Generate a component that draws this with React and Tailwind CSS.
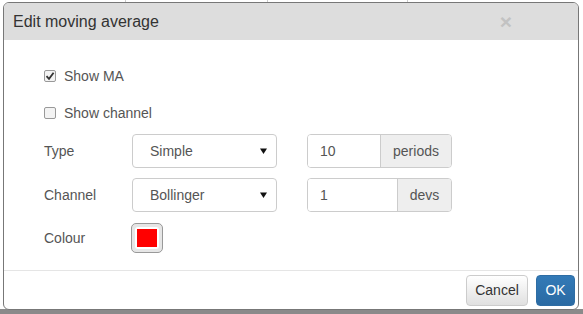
import React from 'react';

const Caret = () => (
  <svg width="7" height="6" viewBox="0 0 7 6" className="shrink-0">
    <path d="M0 0.5 L7 0.5 L3.5 6 Z" fill="#111" />
  </svg>
);

const SelectBox = ({ value }) => (
  <div className="w-[145px] h-[34px] flex items-center justify-between pl-[17px] pr-[9px] bg-white border border-[#ccc] rounded-[4px] text-[14px] text-[#555]">
    <span>{value}</span>
    <Caret />
  </div>
);

const InputGroup = ({ value, addon, inputWidth }) => (
  <div className="w-[145px] h-[34px] flex border border-[#ccc] rounded-[4px] overflow-hidden text-[14px] text-[#555]">
    <div className="flex items-center pl-[12px] bg-white shrink-0" style={{ width: inputWidth }}>
      {value}
    </div>
    <div className="flex-1 flex items-center justify-center bg-[#eee] border-l border-[#ccc]">{addon}</div>
  </div>
);

const Check = ({ checked, label }) => (
  <label className="flex items-center h-[20px] gap-[8px]">
    <span className="w-[12px] h-[12px] rounded-[2px] border border-[#999] bg-[#f3f3f3] flex items-center justify-center">
      {checked && (
        <svg width="10" height="10" viewBox="0 0 10 10">
          <path d="M1.5 5.2 L4 7.8 L8.6 1.8" fill="none" stroke="#333" strokeWidth="1.8" />
        </svg>
      )}
    </span>
    <span>{label}</span>
  </label>
);

export default function App() {
  return (
    <div
      className="relative w-[583px] h-[314px] overflow-hidden bg-white"
      style={{ fontFamily: '"Liberation Sans", Arial, sans-serif' }}
    >
      {/* page behind the dialog */}
      <div className="absolute inset-0 flex">
        <div className="w-[126px] border-r border-[#ccc]" />
        <div className="w-[142px] border-r border-[#ccc]" />
        <div className="w-[140px] border-r border-[#ccc]" />
      </div>
      <div className="absolute left-0 right-0 top-[309px] h-[5px] bg-[#8a8a8a]" />

      {/* dialog */}
      <div className="absolute left-[3px] top-[2px] w-[576px] h-[308px] flex flex-col bg-white border border-[#777] rounded-[6px] overflow-hidden">
        <div className="h-[37px] shrink-0 flex items-center justify-between bg-[#ddd] pl-[9px] pr-[66px]">
          <span className="text-[16px] text-[#333]">Edit moving average</span>
          <span className="text-[21px] font-bold text-[#c2c2c2] leading-none">×</span>
        </div>

        <div className="flex-1 flex flex-col pl-[40px] pt-[26px] text-[14px] text-[#555]">
          <Check checked label="Show MA" />
          <div className="mt-[17px]">
            <Check label="Show channel" />
          </div>
          <div className="mt-[11px] flex items-center">
            <span className="w-[88px]">Type</span>
            <SelectBox value="Simple" />
            <div className="ml-[30px]">
              <InputGroup value="10" addon="periods" inputWidth="72px" />
            </div>
          </div>
          <div className="mt-[10px] flex items-center">
            <span className="w-[88px]">Channel</span>
            <SelectBox value="Bollinger" />
            <div className="ml-[30px]">
              <InputGroup value="1" addon="devs" inputWidth="89px" />
            </div>
          </div>
          <div className="mt-[11px] flex items-center">
            <span className="w-[87px]">Colour</span>
            <div className="w-[32px] h-[30px] rounded-[5px] border border-[#999] bg-[#e6e6e6] p-[3px]">
              <div className="w-full h-full rounded-[3px] bg-white p-[2px]">
                <div className="w-full h-full bg-[#ff0000]" />
              </div>
            </div>
          </div>
        </div>

        <div className="h-[39px] shrink-0 border-t border-[#e5e5e5] flex items-center justify-end gap-[8px] pr-[3px]">
          <button className="h-[31px] w-[62px] rounded-[4px] border border-[#ccc] bg-gradient-to-b from-white to-[#e0e0e0] text-[14px] text-[#333]">
            Cancel
          </button>
          <button className="h-[31px] w-[39px] rounded-[4px] border border-[#2e6da4] bg-gradient-to-b from-[#337ab7] to-[#2a6aa3] text-[14px] text-white">
            OK
          </button>
        </div>
      </div>
    </div>
  );
}
